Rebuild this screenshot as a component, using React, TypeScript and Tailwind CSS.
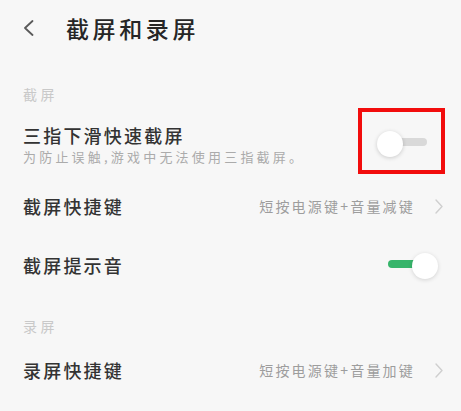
import React from "react";

const font = { fontFamily: '"Noto Sans CJK SC", "Noto Sans", sans-serif' };

function ChevronRight() {
  return (
    <svg width="8" height="15" viewBox="0 0 8 15" fill="none">
      <path d="M1 1 L7 7.5 L1 14" stroke="#cfcfcf" strokeWidth="1.4" strokeLinecap="round" strokeLinejoin="round" />
    </svg>
  );
}

function SwitchOff() {
  return (
    <div className="relative w-[52px] h-[26px]">
      <div className="absolute left-[8px] top-[7px] w-[42px] h-[8px] rounded-full bg-[#d9d9d9]" />
      <div className="absolute left-0 top-0 w-[26px] h-[26px] rounded-full bg-white shadow-[0_1px_4px_rgba(0,0,0,0.18)]" />
    </div>
  );
}

function SwitchOn() {
  return (
    <div className="relative w-[50px] h-[26px]">
      <div className="absolute left-0 top-[8px] w-[40px] h-[8px] rounded-full bg-[#37b56b]" />
      <div className="absolute right-0 top-[1px] w-[26px] h-[26px] rounded-full bg-white shadow-[0_1px_4px_rgba(0,0,0,0.15)]" />
    </div>
  );
}

function SectionLabel({ text, h, pt }: { text: string; h: string; pt: string }) {
  return (
    <div className={`${h} ${pt} pl-[23px]`}>
      <div className="text-[14px] leading-[20px] tracking-[3.5px] text-[#c9c9c9]">{text}</div>
    </div>
  );
}

function NavRow({ title, value, h }: { title: string; value: string; h: string }) {
  return (
    <div className={`${h} flex items-center justify-between pl-[23px] pr-[18px]`}>
      <div className="text-[18px] leading-[24px] tracking-[2.2px] font-medium text-[#333333]">{title}</div>
      <div className="flex items-center gap-[20px]">
        <div className="text-[14px] leading-[20px] tracking-[2.2px] text-[#9d9d9d]">{value}</div>
        <ChevronRight />
      </div>
    </div>
  );
}

export default function App() {
  return (
    <div className="w-[461px] h-[411px] bg-[#f7f7f7] overflow-hidden" style={font}>
      {/* Header */}
      <div className="h-[56px] flex items-center pl-[23px]">
        <svg width="11" height="16" viewBox="0 0 11 16" fill="none">
          <path d="M9.5 1 L2 8 L9.5 15" stroke="#5a5a5a" strokeWidth="1.8" strokeLinecap="round" strokeLinejoin="round" />
        </svg>
        <div className="ml-[32px] text-[23px] leading-[30px] tracking-[3.6px] font-medium text-[#262626]">截屏和录屏</div>
      </div>

      <SectionLabel text="截屏" h="h-[56px]" pt="pt-[28px]" />

      {/* Row 1 with switch */}
      <div className="relative h-[64px] flex items-center justify-between pl-[23px] pr-[32px]">
        <div className="flex flex-col">
          <div className="text-[18px] leading-[24px] tracking-[2.2px] font-medium text-[#333333]">三指下滑快速截屏</div>
          <div className="mt-[1px] text-[13px] leading-[18px] tracking-[3.2px] text-[#ababab]">为防止误触,游戏中无法使用三指截屏。</div>
        </div>
        <SwitchOff />
        <div className="absolute left-[358px] top-[-4px] w-[87px] h-[66px] border-[4px] border-[#f20d0d]" />
      </div>

      <NavRow title="截屏快捷键" value="短按电源键+音量减键" h="h-[60px]" />

      <div className="h-[58px] flex items-center justify-between pl-[23px] pr-[23px]">
        <div className="text-[18px] leading-[24px] tracking-[2.2px] font-medium text-[#333333]">截屏提示音</div>
        <SwitchOn />
      </div>

      <SectionLabel text="录屏" h="h-[54px]" pt="pt-[22px]" />

      <NavRow title="录屏快捷键" value="短按电源键+音量加键" h="h-[44px]" />
    </div>
  );
}
